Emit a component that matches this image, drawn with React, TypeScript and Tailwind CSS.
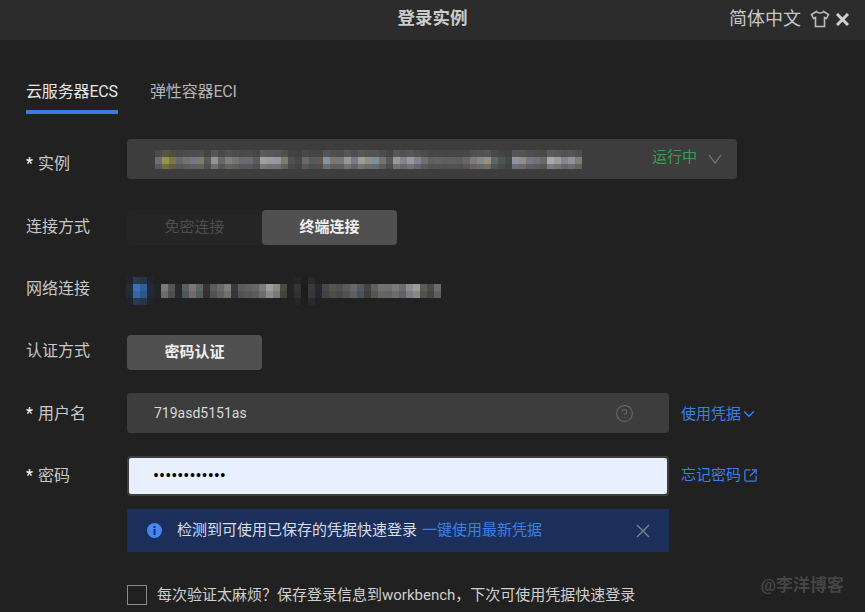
import { ChevronDown, CircleHelp, SquareArrowOutUpRight } from "lucide-react"

const instanceCells = [
    "#6f7a85", "#a8a04c", "#8a7f45", "#6b7077", "#7a7a78", "#7f8090", "#8a8474", "#55605f", "#a5a29b", "#6f6f72",
    "#8a8a88", "#808078", "#747075", "#727278", "#5f6069", "#b0b0ac", "#a8a8ae", "#a6a6a6", "#8c8678", "#555553",
    "#4a4a4a", "#6d6f6d", "#586063", "#6a5a5c", "#94a0ac", "#8a807c", "#80827f", "#a6a8a8", "#858590", "#b0aca0",
    "#a09c94", "#8a9ca6", "#7c7c7a", "#5c5c5a", "#a3a9a9", "#8f8f9c", "#a7a7aa", "#8e8e9c", "#7c7775", "#656565",
    "#686868", "#646464", "#666666", "#626262", "#706c6c", "#8d8488", "#8c9898", "#a49e90", "#6a6c68", "#505a5c",
    "#4a4a48", "#9aa4b0", "#a09a90", "#7e8290", "#7a7c86", "#72706c", "#b8bcc2", "#b0aba0", "#8a94a0", "#a0a0a4",
    "#8a8878",
]

const networkCells = [
    "#222c3a", "#3a72bc", "#2f609c", "#202a38", "#232323", "#7a7a76", "#55565a", "#2a2a2a", "#566066", "#7e7775",
    "#5e6465", "#38352f", "#5a5a5e", "#6a6a68", "#7c7f78", "#3a3a3a", "#5c5c60", "#626062", "#6a6468", "#7a7a7c",
    "#a09ca0", "#8c8888", "#4a4a40", "#232323", "#333333", "#1c1c1c", "#3a3a3a", "#232838", "#4a4842", "#56544e",
    "#4e5050", "#5a5a58", "#66686a", "#505a64", "#45433a", "#5e6060", "#70746e", "#6c7270", "#78787e", "#6e6c6a",
    "#8c8c98", "#9a9c96", "#5a5a58", "#4a4a48", "#6a6a68",
]

const Mosaic = ({ cells, rows, width, height }: {
    cells: string[],
    rows: { opacity: number, only?: number[] }[],
    width: number,
    height: number
}) => {
    return (
        <svg width={width} height={height} shapeRendering="crispEdges" className="block">
            {rows.map((row, r) =>
                cells.map((color, c) => (
                    (!row.only || row.only.includes(c)) &&
                    <rect key={`${r}-${c}`} x={c * 7} y={r * 7} width={7} height={7} fill={color} opacity={row.opacity} />
                ))
            )}
        </svg>
    )
}

const Label = ({ text, required, className }: { text: string, required?: boolean, className?: string }) => {
    return (
        <div className={`w-[101px] shrink-0 text-base text-[#c8c8c8] ${className ?? ""}`}>
            {required && <span className="mr-[5px] text-white">*</span>}
            {text}
        </div>
    )
}

const App = () => {
    return (
        <div className="relative h-[612px] w-[865px] overflow-hidden bg-[#212121] font-['Roboto','Noto_Sans_CJK_SC',sans-serif]">
            <div className="relative flex h-10 items-center justify-center bg-[#2c2c2c]">
                <span className="mb-1 text-[17.5px] font-bold text-[#cccccc]">登录实例</span>
                <div className="absolute right-4 flex items-center text-[#c8c8c8]">
                    <span className="mb-[3px] text-lg">简体中文</span>
                    <svg width="20" height="20" viewBox="0 0 20 20" fill="none" stroke="#bdbdbd" strokeWidth="1.6" className="mb-0.5 ml-[9px]">
                        <path d="M6.5 2.5 L1.5 5.5 L3.5 9.5 L5.5 8.5 V17.5 H14.5 V8.5 L16.5 9.5 L18.5 5.5 L13.5 2.5 C12.5 4.5 7.5 4.5 6.5 2.5 Z" />
                    </svg>
                    <svg width="13" height="13" viewBox="0 0 13 13" stroke="#d0d0d0" strokeWidth="3" className="mb-0.5 ml-1.5">
                        <path d="M1 1 L12 12 M12 1 L1 12" />
                    </svg>
                </div>
            </div>

            <div className="flex flex-col px-[26px]">
                <div className="mt-[34px] flex gap-8 text-base">
                    <div className="h-10 w-[92px] whitespace-nowrap border-b-4 border-[#3b78dc] leading-[36px] tracking-[-0.15px] text-[#e6e6e6]">云服务器ECS</div>
                    <div className="h-10 whitespace-nowrap leading-[36px] tracking-[-0.15px] text-[#b4b4b4]">弹性容器ECI</div>
                </div>

                <div className="mt-[25px] flex">
                    <div className="mt-[13px]">
                        <Label text="实例" required />
                    </div>
                    <div className="flex h-10 w-[610px] items-center rounded-sm bg-[#3d3d3d] pl-7 pr-[15px]">
                        <Mosaic cells={instanceCells} rows={[{ opacity: 0.25 }, { opacity: 0.85 }, { opacity: 0.5 }]} width={427} height={19} />
                        <span className="mb-[3px] ml-auto text-[15px] text-[#3f9a4e]">运行中</span>
                        <svg width="14" height="10" viewBox="0 0 14 10" fill="none" stroke="#7a7a7a" strokeWidth="1.2" className="mb-px ml-[11px]">
                            <path d="M1 1 L7 9 L13 1" />
                        </svg>
                    </div>
                </div>

                <div className="mt-[31px] flex items-center">
                    <Label text="连接方式" className="mb-0.5" />
                    <div className="flex">
                        <div className="flex h-[35px] w-[135px] items-center justify-center rounded-l-sm bg-[#252525] text-[15px] text-[#4e4e4e]">免密连接</div>
                        <div className="flex h-[35px] w-[135px] items-center justify-center rounded-sm bg-[#505050] text-[15px] font-bold text-[#f0f0f0]">终端连接</div>
                    </div>
                </div>

                <div className="mt-[27px] flex h-[35px] items-center">
                    <Label text="网络连接" className="mb-0.5" />
                    <div className="-ml-px mt-0.5">
                        <Mosaic
                            cells={networkCells}
                            rows={[
                                { opacity: 0.3, only: [0, 1, 2, 3, 24, 25, 26] },
                                { opacity: 1 },
                                { opacity: 0.85 },
                                { opacity: 0.3, only: [0, 1, 2, 3, 24, 25, 26] }
                            ]}
                            width={315}
                            height={28}
                        />
                    </div>
                </div>

                <div className="mt-[28px] flex items-center">
                    <Label text="认证方式" className="mb-1" />
                    <div className="flex h-[35px] w-[135px] items-center justify-center rounded-sm bg-[#505050] text-[15px] font-bold text-[#f0f0f0]">密码认证</div>
                </div>

                <div className="mt-[23px] flex items-center">
                    <Label text="用户名" required className="mt-0.5" />
                    <div className="flex h-10 w-[542px] items-center rounded-sm bg-[#3d3d3d] pl-[27px] pr-[35px]">
                        <input readOnly value="719asd5151as" className="min-w-0 flex-1 bg-transparent text-[14px] text-[#d8d8d8] outline-none" />
                        <CircleHelp size={19} strokeWidth={1.3} className="text-[#6a6a6a]" />
                    </div>
                    <div className="ml-3 mt-0.5 flex items-center text-[15px] text-[#3c7fe8]">
                        使用凭据
                        <ChevronDown size={18} strokeWidth={2} className="ml-[-1px]" />
                    </div>
                </div>

                <div className="mt-[23px] flex items-center">
                    <Label text="密码" required />
                    <div className="flex h-10 w-[542px] items-center rounded-sm border-2 border-[#3d3d3d] bg-[#e8f0fe] pl-6">
                        <input readOnly type="password" value="123456789012" className="w-full bg-transparent text-lg text-black outline-none" />
                    </div>
                    <div className="mb-0.5 ml-3 flex items-center text-[15px] text-[#3c7fe8]">
                        忘记密码
                        <SquareArrowOutUpRight size={15} strokeWidth={2} className="ml-[2px]" />
                    </div>
                </div>

                <div className="ml-[101px] mt-[13px] flex h-[43px] w-[542px] items-center self-start bg-[#1c2f5a] pl-5 pr-[19px]">
                    <svg width="15" height="15" viewBox="0 0 15 15" className="shrink-0">
                        <circle cx="7.5" cy="7.5" r="7.5" fill="#4586f5" />
                        <rect x="6.5" y="3" width="2" height="2" fill="#1c2f5a" />
                        <rect x="6.5" y="6" width="2" height="6" fill="#1c2f5a" />
                    </svg>
                    <span className="ml-[15px] text-[15px] text-[#d8dde8]">检测到可使用已保存的凭据快速登录</span>
                    <span className="ml-[5px] text-[15px] text-[#3c7fe8]">一键使用最新凭据</span>
                    <svg width="14" height="14" viewBox="0 0 14 14" stroke="#7c8494" strokeWidth="1.3" className="ml-auto shrink-0">
                        <path d="M1 1 L13 13 M13 1 L1 13" />
                    </svg>
                </div>

                <div className="ml-[101px] mt-8 flex items-center">
                    <div className="h-5 w-5 shrink-0 border border-[#8a8a8a]" />
                    <span className="ml-2.5 text-[15px] text-[#d0d0d0]">每次验证太麻烦？保存登录信息到workbench，下次可使用凭据快速登录</span>
                </div>
            </div>

            <div className="absolute right-[21px] top-[573px] text-[17px] font-bold text-[#464646] blur-[0.5px]">@李洋博客</div>
        </div>
    )
}

export default App
